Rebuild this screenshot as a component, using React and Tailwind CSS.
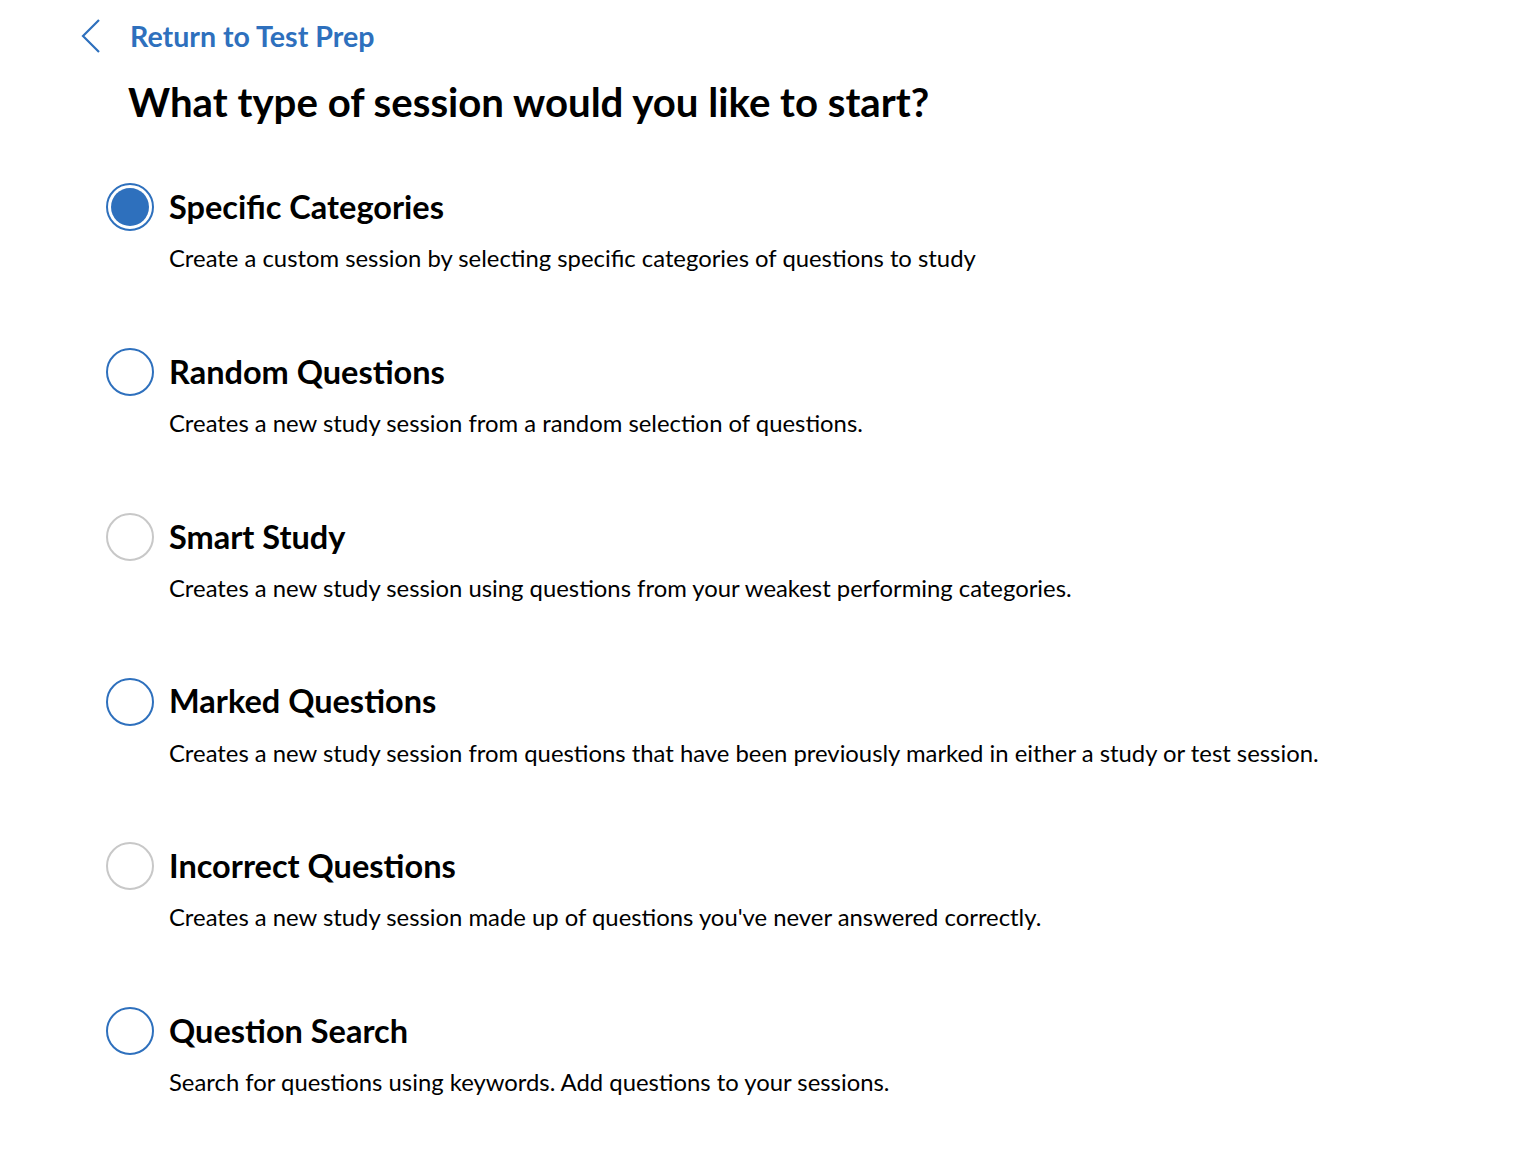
import React from "react";

const options = [
  { title: "Specific Categories", desc: "Create a custom session by selecting specific categories of questions to study", state: "selected" },
  { title: "Random Questions", desc: "Creates a new study session from a random selection of questions.", state: "blue" },
  { title: "Smart Study", desc: "Creates a new study session using questions from your weakest performing categories.", state: "gray" },
  { title: "Marked Questions", desc: "Creates a new study session from questions that have been previously marked in either a study or test session.", state: "blue" },
  { title: "Incorrect Questions", desc: "Creates a new study session made up of questions you've never answered correctly.", state: "gray" },
  { title: "Question Search", desc: "Search for questions using keywords. Add questions to your sessions.", state: "blue" },
];

function Radio({ state }) {
  if (state === "selected") {
    return (
      <div className="w-[48px] h-[48px] rounded-full border-2 border-[#2e70bd] flex items-center justify-center shrink-0">
        <div className="w-[38px] h-[38px] rounded-full bg-[#2e70bd]" />
      </div>
    );
  }
  return (
    <div
      className={
        "w-[48px] h-[48px] rounded-full border-2 shrink-0 " +
        (state === "blue" ? "border-[#2e70bd]" : "border-[#c8c8c8]")
      }
    />
  );
}

export default function App() {
  return (
    <div className="min-h-screen bg-white text-black" style={{ fontFamily: "Lato, 'Open Sans', sans-serif" }}>
      <div className="pl-[80px] pt-[18px] flex items-center gap-[28px]">
        <svg width="22" height="36" viewBox="0 0 22 36" fill="none">
          <path d="M19 2 L3 18 L19 34" stroke="#2e70bd" strokeWidth="2.2" />
        </svg>
        <span className="text-[28.6px] font-bold text-[#2e70bd] leading-none">Return to Test Prep</span>
      </div>
      <h1 className="pl-[128px] mt-[28px] text-[40.2px] font-bold leading-none">
        What type of session would you like to start?
      </h1>
      <div className="pl-[106px] mt-[61px] flex flex-col gap-[74.8px]">
        {options.map((o) => (
          <div key={o.title} className="flex flex-col">
            <div className="flex items-center gap-[15px] h-[48px]">
              <Radio state={o.state} />
              <span className="text-[32.5px] font-bold leading-none">{o.title}</span>
            </div>
            <div className="pl-[63px] mt-[12px] text-[23.85px] leading-[30px]">{o.desc}</div>
          </div>
        ))}
      </div>
    </div>
  );
}
